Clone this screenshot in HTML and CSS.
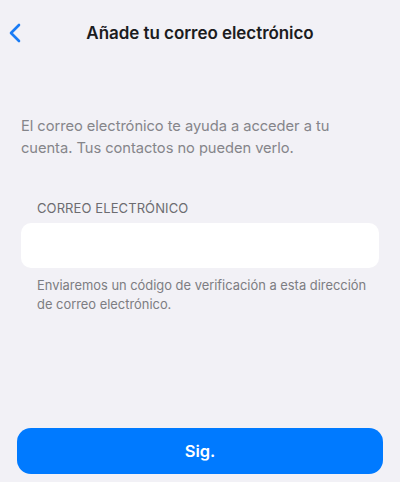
FILE: index.html
```html
<!DOCTYPE html>
<html lang="es">
<head>
<meta charset="utf-8">
<link rel="stylesheet" href="styles.css">
</head>
<body>
<div class="screen">
  <header class="nav">
    <svg class="back" width="14" height="20" viewBox="0 0 14 20"><path d="M11 2 L3 10 L11 18" fill="none" stroke="#1a7cf5" stroke-width="2.6" stroke-linecap="round" stroke-linejoin="round"/></svg>
    <h1 class="title">Añade tu correo electrónico</h1>
  </header>
  <p class="intro">El correo electrónico te ayuda a acceder a tu cuenta. Tus contactos no pueden verlo.</p>
  <div class="field">
    <div class="label">CORREO ELECTRÓNICO</div>
    <div class="input"></div>
    <p class="help">Enviaremos un código de verificación a esta dirección de correo electrónico.</p>
  </div>
  <div class="spacer"></div>
  <button class="next">Sig.</button>
</div>
</body>
</html>
```
FILE: styles.css
```css
html, body { margin: 0; padding: 0; }
body {
  background: #f2f1f6;
  font-family: "Inter", "Liberation Sans", sans-serif;
  width: 400px;
  height: 482px;
  overflow: hidden;
}
.screen {
  display: flex;
  flex-direction: column;
  height: 482px;
  box-sizing: border-box;
  padding: 0 0 8px;
}
.nav {
  position: relative;
  height: 66px;
  display: flex;
  align-items: center;
  justify-content: center;
}
.back {
  position: absolute;
  left: 8px;
  top: 23px;
}
.title {
  margin: 0;
  font-size: 17px;
  font-weight: 600;
  color: #1c1c1e;
  letter-spacing: -0.05px;
}
.intro {
  margin: 49px 21px 0;
  font-size: 14.7px;
  line-height: 22px;
  color: #85858a;
  letter-spacing: -0.05px;
}
.field {
  margin: 41px 21px 0;
}
.label {
  padding-left: 16px;
  font-size: 13px;
  line-height: 16px;
  color: #6c6c70;
  letter-spacing: 0.1px;
}
.input {
  margin-top: 7px;
  height: 45px;
  background: #ffffff;
  border-radius: 10px;
}
.help {
  margin: 8px 0 0;
  padding-left: 16px;
  font-size: 12.9px;
  line-height: 19px;
  color: #7d7d82;
}
.spacer { flex: 1; }
.next {
  margin: 0 17px;
  height: 46px;
  border: none;
  border-radius: 14px;
  background: #007aff;
  color: #ffffff;
  font-family: "Inter", "Liberation Sans", sans-serif;
  font-size: 16.5px;
  font-weight: 600;
}
```
